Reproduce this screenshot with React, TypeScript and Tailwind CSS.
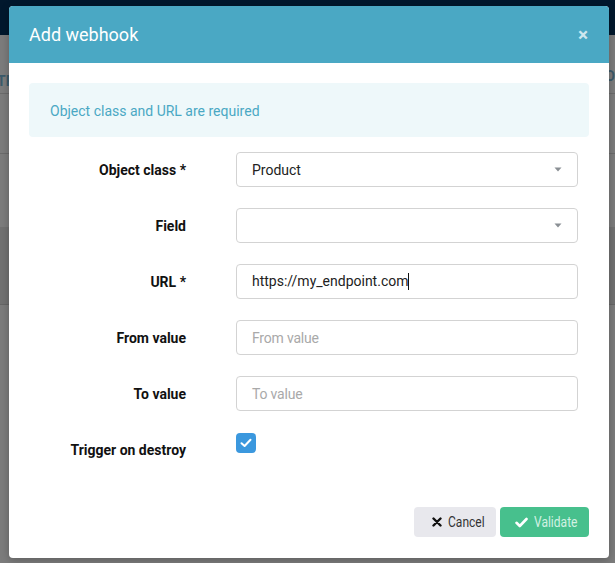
import React from "react";

function Caret() {
  return (
    <svg width="8" height="5" viewBox="0 0 8 5" className="shrink-0">
      <path d="M0.5 0.5 L7.5 0.5 L4 4.5 Z" fill="#8a8f94" />
    </svg>
  );
}

function Row({ label, children }: { label: string; children: React.ReactNode }) {
  return (
    <div className="flex items-center">
      <div className="w-[157px] text-right text-[14px] font-bold text-[#111] leading-[20px]">{label}</div>
      <div className="ml-[50px] w-[342px]">{children}</div>
    </div>
  );
}

export default function App() {
  return (
    <div
      className="relative w-[615px] h-[563px] overflow-hidden bg-[#7c7c7c]"
      style={{ fontFamily: "Roboto, 'Liberation Sans', sans-serif" }}
    >
      {/* dimmed background page */}
      <div className="h-[35px] bg-[#01182d]" />
      <div className="h-[59px] border-b border-[#6b6b6b] flex items-center justify-between overflow-hidden">
        <span className="mt-[34px] text-[14px] font-bold text-[#3b5a6a] -ml-[3px]">TF</span>
        <span className="mt-[24px] text-[14px] font-bold text-[#3b5a6a] -mr-[4px]">OI</span>
      </div>
      <div className="h-[60px] border-b border-[#6b6b6b]" />
      <div className="h-[73px]" />
      <div className="h-[78px] bg-[#717171] border-b border-[#666]" />

      {/* modal */}
      <div className="absolute left-[9px] top-[6px] w-[600px] rounded-[4px] bg-white overflow-hidden shadow-[0_2px_8px_rgba(0,0,0,0.25)]">
        <div className="h-[57px] bg-[#4aa8c4] flex items-center justify-between pl-[20px] pr-[21px]">
          <span className="text-[18px] text-white leading-[22px]">Add webhook</span>
          <span className="text-[19px] font-bold text-[#cde7ef] leading-[20px]">×</span>
        </div>
        <div className="px-[20px] pt-[20px]">
          <div className="h-[54px] rounded-[4px] bg-[#eef8fa] flex items-center px-[21px] pt-[2px] text-[14px] text-[#4aa8c4]">
            Object class and URL are required
          </div>
          <div className="mt-[15px] flex flex-col gap-[21px]">
            <Row label="Object class *">
              <div className="h-[35px] rounded-[4px] border border-[#d3d3d3] flex items-center justify-between pl-[15px] pr-[15px] text-[14px] text-[#222]">
                <span className="pt-[1px]">Product</span>
                <Caret />
              </div>
            </Row>
            <Row label="Field">
              <div className="h-[35px] rounded-[4px] border border-[#d3d3d3] flex items-center justify-end pl-[15px] pr-[15px]">
                <Caret />
              </div>
            </Row>
            <Row label="URL *">
              <div className="h-[35px] rounded-[4px] border border-[#d3d3d3] flex items-center pl-[15px] text-[14px] text-[#222]">
                <span>https://my_endpoint.com</span>
                <span className="inline-block w-px h-[17px] bg-[#111]" />
              </div>
            </Row>
            <Row label="From value">
              <div className="h-[35px] rounded-[4px] border border-[#d3d3d3] flex items-center pl-[15px] pt-[1px] text-[14px] text-[#a9a9a9] tracking-[-0.2px]">
                From value
              </div>
            </Row>
            <Row label="To value">
              <div className="h-[35px] rounded-[4px] border border-[#d3d3d3] flex items-center pl-[15px] pt-[1px] text-[14px] text-[#a9a9a9] tracking-[-0.2px]">
                To value
              </div>
            </Row>
          </div>
          <div className="mt-[22px] flex items-start">
            <div className="w-[157px] pt-[7px] text-right text-[14px] font-bold text-[#111] leading-[20px]">
              Trigger on destroy
            </div>
            <div className="ml-[50px] w-[20px] h-[20px] rounded-[4px] bg-[#3b98de] flex items-center justify-center">
              <svg width="12" height="10" viewBox="0 0 12 10">
                <path d="M1.5 5.2 L4.6 8 L10.5 1.8" stroke="white" strokeWidth="2" fill="none" strokeLinecap="round" strokeLinejoin="round" />
              </svg>
            </div>
          </div>
        </div>
        <div className="flex justify-end gap-[4px] pr-[20px] pt-[47px] pb-[21px]">
          <div className="h-[30px] w-[82px] rounded-[4px] bg-[#e8e8ed] flex items-center pl-[18px] text-[14px] text-[#333]">
            <svg width="10" height="10" viewBox="0 0 10 10" className="shrink-0">
              <path d="M1.5 1.5 L8.5 8.5 M8.5 1.5 L1.5 8.5" stroke="#111" strokeWidth="2.4" strokeLinecap="round" />
            </svg>
            <span className="inline-block origin-left scale-x-[0.86] ml-[6px]">Cancel</span>
          </div>
          <div className="h-[30px] w-[89px] rounded-[4px] bg-[#47c08d] flex items-center pl-[15px] text-[14px] text-[#d2f1e3]">
            <svg width="13" height="11" viewBox="0 0 13 11" className="shrink-0">
              <path d="M1.5 5.8 L4.8 9 L11.5 2" stroke="white" strokeWidth="2.6" fill="none" strokeLinecap="round" strokeLinejoin="round" />
            </svg>
            <span className="inline-block origin-left scale-x-[0.86] ml-[6px]">Validate</span>
          </div>
        </div>
      </div>
    </div>
  );
}
